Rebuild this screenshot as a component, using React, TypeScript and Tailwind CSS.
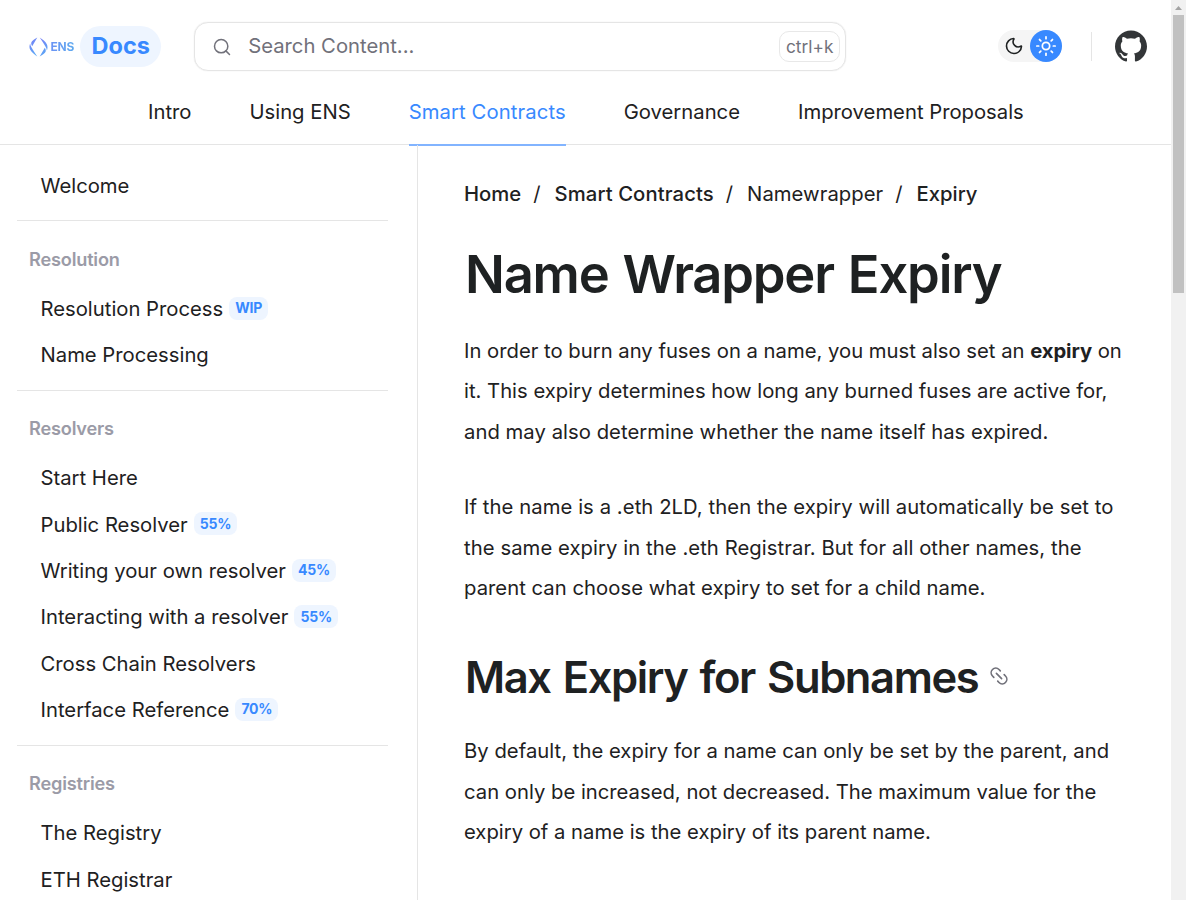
import { Moon, Sun, Link2, Search } from "lucide-react";
import { SiGithub } from "react-icons/si";

type Item = { label: string; badge?: string };
type Section = { title?: string; items: Item[] };

const SECTIONS: Section[] = [
  { items: [{ label: "Welcome" }] },
  {
    title: "Resolution",
    items: [{ label: "Resolution Process", badge: "WIP" }, { label: "Name Processing" }],
  },
  {
    title: "Resolvers",
    items: [
      { label: "Start Here" },
      { label: "Public Resolver", badge: "55%" },
      { label: "Writing your own resolver", badge: "45%" },
      { label: "Interacting with a resolver", badge: "55%" },
      { label: "Cross Chain Resolvers" },
      { label: "Interface Reference", badge: "70%" },
    ],
  },
  {
    title: "Registries",
    items: [{ label: "The Registry" }, { label: "ETH Registrar" }],
  },
];

const TABS = ["Intro", "Using ENS", "Smart Contracts", "Governance", "Improvement Proposals"];

function Logo() {
  return (
    <div className="flex items-center">
      <svg width="19" height="20" viewBox="0 0 19 20" className="mr-[3px]">
        <defs>
          <linearGradient id="ens" x1="0" y1="0" x2="0.4" y2="1">
            <stop offset="0" stopColor="#7a7cf7" />
            <stop offset="1" stopColor="#5ba6f5" />
          </linearGradient>
        </defs>
        <g fill="url(#ens)">
          <path d="M8.3.5 3.2 9.2C2.4 8 2 6.700 2.300 5.500 2.800 4 5.500 2.200 8.300.5ZM1.200 6.400C.3 8.200.2 10.800 1.200 12.800 2.400 15.300 5.600 17.700 8.300 19.500 5.700 15.700 3.600 12.300 2.300 9.900 1.600 8.600 1.200 7.600 1.200 6.400Z" />
          <path d="M10.700 19.500 15.800 10.800C16.600 12 17 13.300 16.700 14.500 16.200 16 13.500 17.800 10.700 19.500ZM17.800 13.600C18.700 11.800 18.800 9.200 17.800 7.200 16.600 4.700 13.400 2.300 10.700.5 13.300 4.300 15.400 7.700 16.700 10.100 17.400 11.400 17.800 12.400 17.800 13.600Z" />
        </g>
      </svg>
      <span className="bg-linear-to-r from-[#6a94f5] to-[#5fa9ee] bg-clip-text text-[12px] font-bold tracking-[-0.2px] text-transparent">
        ENS
      </span>
      <span className="ml-[6px] flex h-[41px] w-[81px] items-center justify-center rounded-full bg-[#eef5ff] pb-px text-[23.500px] font-bold text-[#3889ff]">
        Docs
      </span>
    </div>
  );
}

function Header() {
  return (
    <header className="h-[145px] shrink-0 border-b border-[#e5e5e5]">
      <div className="flex h-[93px] items-center pl-[28.500px] pr-[24px]">
        <Logo />
        <div className="ml-[33px] flex h-[49px] w-[652px] items-center rounded-[14px] border border-[#e5e5e5] pl-[17px] pr-[5px] shadow-[0_0_1px_#d4d4d4]">
          <Search className="size-[20px] text-[#71717a]" strokeWidth={1.8} />
          <span className="ml-[16px] text-[20.250px] text-[#71717a]">Search Content...</span>
          <span className="ml-auto flex h-[31px] w-[61px] items-center justify-center rounded-[10px] border border-[#e8e8e8] text-[17.300px] text-[#71717a]">
            ctrl+k
          </span>
        </div>
        <div className="-mt-px ml-auto flex items-center">
          <div className="flex h-8 w-16 items-center rounded-full bg-[#f5f5f5]">
            <span className="flex size-8 items-center justify-center">
              <Moon className="size-[20px] text-[#1e2122]" strokeWidth={1.9} />
            </span>
            <span className="flex size-8 items-center justify-center rounded-full bg-[#3889ff]">
              <Sun className="size-[22px] text-white" strokeWidth={1.9} />
            </span>
          </div>
          <span className="ml-[29px] h-[29px] w-px bg-[#e5e5e5]" />
          <SiGithub className="ml-[23px] size-8 text-[#333638]" />
        </div>
      </div>
      <nav className="flex h-[53px] gap-[58px] pl-[148px] text-[20.250px] leading-[38px] text-[#1e2122]">
        {TABS.map((t) => (
          <a
            key={t}
            className={
              t === "Smart Contracts"
                ? "h-[53px] whitespace-nowrap border-b-2 border-[#82b4ff] tracking-[0.1px] text-[#3889ff]"
                : "h-[53px] whitespace-nowrap"
            }
          >
            {t}
          </a>
        ))}
      </nav>
    </header>
  );
}

function Sidebar() {
  return (
    <aside className="w-[418px] shrink-0 overflow-hidden border-r border-[#e5e5e5] pl-[17px] pr-[29px] pt-[18px]">
      {SECTIONS.map((s, i) => (
        <section
          key={i}
          className={i < SECTIONS.length - 1 ? "border-b border-[#e5e5e5] pb-[11px]" : ""}
        >
          {s.title && (
            <h4 className="flex h-[64.600px] items-center pl-[12px] pt-[12px] text-[18.200px] font-semibold tracking-[-0.200px] text-[#9b9ba7]">
              {s.title}
            </h4>
          )}
          {s.items.map((it) => (
            <div
              key={it.label}
              className="flex h-[46.380px] items-center pl-[23.500px] text-[20.250px] text-[#1e2122]"
            >
              <span className="whitespace-nowrap">{it.label}</span>
              {it.badge && (
                <span className="mb-[2px] ml-[6px] flex h-[23px] items-center rounded-[8px] bg-[#eef5ff] px-[6px] pb-px text-[14px] font-bold tracking-[-0.2px] text-[#3889ff]">
                  {it.badge}
                </span>
              )}
            </div>
          ))}
        </section>
      ))}
    </aside>
  );
}

function Content() {
  return (
    <main className="min-w-0 flex-1 pl-[46px] text-[#1e2122]">
      <div className="mt-[34px] flex h-[30px] items-center whitespace-nowrap text-[20.250px]">
        <span className="font-medium">Home</span>
        <span className="ml-[12px] mr-[14px]">/</span>
        <span className="font-medium tracking-[0.1px]">Smart Contracts</span>
        <span className="ml-[12px] mr-[14px]">/</span>
        <span className="tracking-[0.050px]">Namewrapper</span>
        <span className="ml-[12px] mr-[14px]">/</span>
        <span className="font-medium">Expiry</span>
      </div>
      <h1 className="mt-[33px] h-[63px] whitespace-nowrap pl-px text-[52.500px] font-semibold leading-[64px] tracking-[-1.200px] [word-spacing:2px]">
        Name Wrapper Expiry
      </h1>
      <p className="mt-[25.500px] whitespace-nowrap text-[20.250px] leading-[40.500px]">
        In order to burn any fuses on a name, you must also set an{" "}
        <strong className="font-bold tracking-[-0.1px]">expiry</strong> on
        <br />
        it. This expiry determines how long any burned fuses are active for,
        <br />
        <span className="tracking-[0.040px]">
          and may also determine whether the name itself has expired.
        </span>
      </p>
      <p className="mt-[35px] whitespace-nowrap text-[20.250px] leading-[40.500px] tracking-[0.070px]">
        If the name is a .eth 2LD, then the expiry will automatically be set to
        <br />
        the same expiry in the .eth Registrar. But for all other names, the
        <br />
        <span className="tracking-[0.030px]">
          parent can choose what expiry to set for a child name.
        </span>
      </p>
      <div className="mt-[36.500px] flex h-[64px] items-center">
        <h2 className="whitespace-nowrap pl-px text-[43.500px] font-semibold leading-[64px] tracking-[-1.400px] [word-spacing:2.500px]">
          Max Expiry for Subnames
        </h2>
        <Link2 className="mb-[2px] ml-[10px] size-[22px] rotate-45 text-[#71717a]" strokeWidth={1.8} />
      </div>
      <p className="mt-[22.200px] whitespace-nowrap text-[20.250px] leading-[40.500px]">
        <span className="tracking-[0.030px]">
          By default, the expiry for a name can only be set by the parent, and
        </span>
        <br />
        can only be increased, not decreased. The maximum value for the
        <br />
        expiry of a name is the expiry of its parent name.
      </p>
    </main>
  );
}

export default function App() {
  return (
    <div className="flex h-[900px] w-[1186px] overflow-hidden bg-white font-['Inter',sans-serif]">
      <div className="flex min-w-0 flex-1 flex-col">
        <Header />
        <div className="flex min-h-0 flex-1">
          <Sidebar />
          <Content />
        </div>
      </div>
      <div className="flex w-[15px] flex-col items-center bg-[#f1f1f1]">
        <svg width="7" height="4" viewBox="0 0 7 4" className="mt-[6px]">
          <path d="M3.500 0 7 4H0Z" fill="#a3a3a3" />
        </svg>
        <div className="mt-[5px] h-[278px] w-[11px] bg-[#c1c1c1]" />
      </div>
    </div>
  );
}
